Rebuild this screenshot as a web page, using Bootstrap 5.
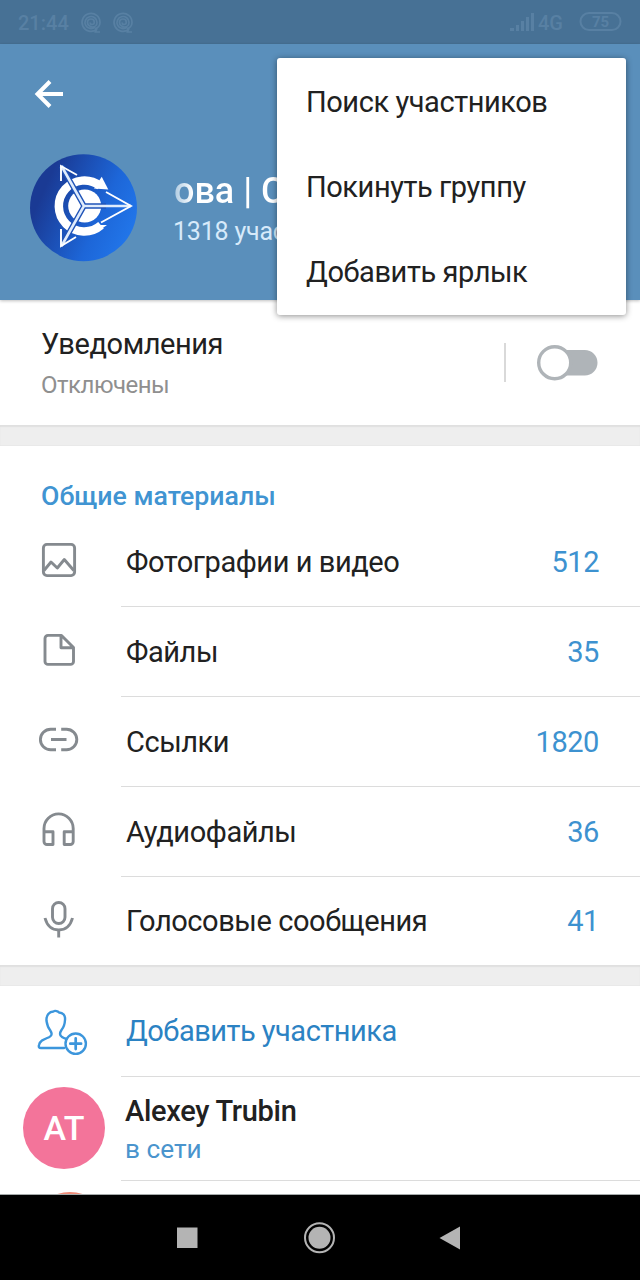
<!DOCTYPE html>
<html lang="ru">
<head>
<meta charset="utf-8">
<meta name="viewport" content="width=device-width, initial-scale=1">
<title>Группа</title>
<link href="https://cdn.jsdelivr.net/npm/bootstrap@5.3.0/dist/css/bootstrap.min.css" rel="stylesheet">
<style>
body{font-family:Roboto,"Noto Sans",sans-serif;font-size:29px;line-height:34px;color:#212121;background:#fff}
.screen{width:640px;height:1280px}
.tight{letter-spacing:-.43px}
.statusbar{height:44px;background:#477195;color:#5880a3;font-size:20px;line-height:44px;font-weight:500;padding-top:2px}
.profile{height:256px;background:#5a8fbb;box-shadow:0 1px 3px rgba(0,0,0,.25);z-index:1}
.group-title{font-size:36px;line-height:40px;font-weight:500;color:#fff;padding-left:1px;background:linear-gradient(90deg,#a9c7df 0,#fff 20px);-webkit-background-clip:text;background-clip:text;-webkit-text-fill-color:transparent}
.group-count{font-size:25px;letter-spacing:-.2px;line-height:30px;color:#d7eafa;margin-top:6px}
.popup{left:277px;top:14px;width:349px;height:257px;border-radius:3px;box-shadow:0 1px 6px rgba(0,0,0,.45);z-index:5;padding-top:1px;background:#fff}
.popup a{height:85.400px;padding-left:29px;color:#212121;text-decoration:none}
.notify{height:125px;padding:27px 41px 0}
.sub-status{font-size:24px;letter-spacing:-.5px;line-height:30px;color:#8f8f8f;margin-top:9px}
.toggle-sep{width:2px;height:39px;background:#d9d9d9;margin-right:31px}
.divider-band{height:21px;background:#eee;box-shadow:inset 0 2px 1px #e0e0e0,inset 0 -1px 0 #e9e9e9}
.heading{height:71px;padding:33px 0 0 41px;font-size:26.700px;font-weight:500;color:#4094d2}
.item{height:90px}
.item-icon{width:121px;flex:none}
.item-body{height:90px;padding:0 41px 0 5px;border-bottom:1px solid #dcdcdc}
.last-item,.last-item .item-body{height:88px;border:0}
.add-item,.add-item .item-body{height:91px}
.item-count{color:#3d92d0}
.line-icon{fill:none;stroke:#858a8f;stroke-width:2.9;stroke-linejoin:round}
.add-text{color:#2b82c3;letter-spacing:-.5px}
.member{height:104px}
.member .item-body{height:104px;padding:17px 0 0 4px}
.initials{width:82px;height:82px;border-radius:50%;background:#f3749a;color:#fff;font-size:34px;font-weight:500;margin:10px 0 0 23px}
.member-name{font-size:29px;letter-spacing:-.3px;font-weight:500;line-height:34px}
.member-status{font-size:26.200px;line-height:34px;color:#4a94cd;margin-top:4px}
.next-member{height:14px;border-bottom:1px solid #a5aaaa}
.navkeys{height:85px;background:#000}
svg{display:block}
</style>
</head>
<body>
<main class="screen d-flex flex-column overflow-hidden position-relative">
  <div class="statusbar d-flex align-items-center flex-shrink-0">
    <span style="width:62px;padding-left:18px">21:44</span>
    <svg width="64" height="30" style="margin-left:14px" viewBox="76 7 64 30" fill="none" stroke="#5880a3" stroke-width="1.700">
      <g id="spiral"><path d="M100 31h-4.500l1-2.500A9 9 0 1 1 100 21.500c0 3.500-2.500 6-5 6M95 26A6 6 0 1 1 97 21.500c0 2.500-2 4.500-4.500 4.500s-5-2-5-4.500 1.500-3.500 3.500-3.500 3.300 1.500 3.300 3.300-1 2.200-2.300 2.200-2-1-1.500-2"/></g>
      <use href="#spiral" x="32"/>
    </svg>
    <svg class="ms-auto" width="29" height="24" viewBox="509 11 29 24" fill="#5880a3"><path d="M510 28h4v3h-4zM516 25h3v6h-3zM521 21h3v10h-3zM526 17h3v14h-3zM531 13h3v18h-3z"/></svg>
    <span style="width:41px">4G</span>
    <svg width="61" height="24" viewBox="579 10 61 24"><rect x="580.500" y="12" width="40" height="17" rx="8.500" fill="none" stroke="#5880a3" stroke-width="2"/><text x="600.500" y="26" text-anchor="middle" font-size="15" font-weight="700" fill="#5880a3">75</text></svg>
  </div>

  <header class="profile position-relative flex-shrink-0">
    <svg width="80" height="100" viewBox="0 44 80 100" fill="none" stroke="#fff" stroke-width="4"><path d="M50 81.500 37.500 94 50 106.500M37.500 94H63"/></svg>
    <div class="d-flex" style="margin-top:10px">
      <svg class="flex-shrink-0" width="173" height="110" viewBox="0 154 173 110">
        <defs><linearGradient id="blue" x1="0" y1=".3" x2="1" y2=".75"><stop offset=".12" stop-color="#1a3a94"/><stop offset=".65" stop-color="#1d66d8"/><stop offset="1" stop-color="#2278ec"/></linearGradient></defs>
        <circle cx="83.500" cy="207.700" r="53.500" fill="url(#blue)"/>
        <path d="M100 185.900A25.500 25.500 0 1 0 101 225.300" fill="none" stroke="#fff" stroke-width="8.500"/>
        <path d="m97 225 10 0-7 5z" fill="#fff"/>
        <path d="m101.700 176.700 6.600 12.800-14.300-1z" fill="#fff"/>
        <circle cx="84.700" cy="206" r="16.500" fill="#fff"/>
        <path d="M61.500 166 84 206 61.500 246M84 206h22" fill="none" stroke="#2054b8" stroke-width="5.500"/>
        <path d="M61.500 166 84 206 61.500 246M84 206h47" fill="none" stroke="#e0ecfc" stroke-width="2.600"/>
        <path d="M61 181v-15l16 9M61 229v17l15-9M106 192l25 14-30 16.500" fill="none" stroke="#fff" stroke-width="1.900"/>
      </svg>
      <div class="text-nowrap" style="padding-top:17px">
        <div class="group-title">ова | С</div>
        <div class="group-count">1318 участников</div>
      </div>
    </div>
    <nav class="popup position-absolute d-flex flex-column tight">
      <a class="d-flex align-items-center" href="#"><span>Поиск участников</span></a>
      <a class="d-flex align-items-center" href="#"><span>Покинуть группу</span></a>
      <a class="d-flex align-items-center" href="#"><span>Добавить ярлык</span></a>
    </nav>
  </header>

  <section class="notify d-flex flex-shrink-0">
    <div>
      <div class="tight">Уведомления</div>
      <div class="sub-status">Отключены</div>
    </div>
    <div class="d-flex ms-auto" style="padding-top:16px">
      <div class="toggle-sep"></div>
      <svg width="62" height="40" viewBox="537 343 62 40"><rect x="553" y="350" width="44.500" height="25.500" rx="12.700" fill="#afb4b8"/><circle cx="554.700" cy="362.700" r="16" fill="#fff" stroke="#afb4b8" stroke-width="3.400"/></svg>
    </div>
  </section>
  <div class="divider-band flex-shrink-0"></div>

  <section class="flex-shrink-0">
    <div class="heading"><span>Общие материалы</span></div>
    <div class="item tight d-flex">
      <svg class="item-icon line-icon" width="121" height="90" viewBox="0 517 121 90"><rect x="43.400" y="544.400" width="31.200" height="31.200" rx="3.500"/><path d="m44 570.500 7-8.500 6.300 6 7-8.500 9.500 11"/></svg>
      <div class="item-body flex-grow-1 d-flex align-items-center justify-content-between"><span>Фотографии и видео</span><span class="item-count">512</span></div>
    </div>
    <div class="item tight d-flex">
      <svg class="item-icon line-icon" width="121" height="90" viewBox="0 607 121 90"><path d="M61.500 635.400H48a3 3 0 0 0-3 3v23a3 3 0 0 0 3 3h22.500a3 3 0 0 0 3-3V647.500zM61 635.500v12.200h12.500"/></svg>
      <div class="item-body flex-grow-1 d-flex align-items-center justify-content-between"><span>Файлы</span><span class="item-count">35</span></div>
    </div>
    <div class="item tight d-flex">
      <svg class="item-icon line-icon" width="121" height="90" viewBox="0 697 121 90"><path d="M56 729.200h-5.300a10.300 10.300 0 0 0 0 20.600H56M61.200 729.200h5.300a10.300 10.300 0 0 1 0 20.600h-5.300M51 739.500h15.500"/></svg>
      <div class="item-body flex-grow-1 d-flex align-items-center justify-content-between"><span>Ссылки</span><span class="item-count">1820</span></div>
    </div>
    <div class="item tight d-flex">
      <svg class="item-icon line-icon" width="121" height="90" viewBox="0 787 121 90"><path d="M44 832v-3.500a14.600 14.600 0 0 1 29.200 0V832M44 831.800h9v12.700h-6a3 3 0 0 1-3-3zM73.200 831.800h-9v12.700h6a3 3 0 0 0 3-3z"/></svg>
      <div class="item-body flex-grow-1 d-flex align-items-center justify-content-between"><span>Аудиофайлы</span><span class="item-count">36</span></div>
    </div>
    <div class="item last-item tight d-flex">
      <svg class="item-icon line-icon" width="121" height="88" viewBox="0 877 121 88"><rect x="52.500" y="902.500" width="12.500" height="21" rx="6.250"/><path d="M45 918c2 7.500 7 12 13.700 12s11.800-4.500 13.800-12M58.700 930v7.500"/></svg>
      <div class="item-body flex-grow-1 d-flex align-items-center justify-content-between"><span>Голосовые сообщения</span><span class="item-count">41</span></div>
    </div>
  </section>
  <div class="divider-band flex-shrink-0"></div>

  <section class="flex-grow-1">
    <div class="item add-item d-flex">
      <svg class="item-icon" width="121" height="90" viewBox="0 986 121 90" fill="none" stroke="#3c96dc" stroke-width="2.400" stroke-linecap="round" stroke-linejoin="round"><path d="M64 1048H41c-2 0-2.500-1-2-3 1-5 6-6 10.500-8 3-1.400 2.500-4 .5-7-2.500-3-3-6-3.500-9-.5-6 3-9.500 7-9.500 1.500-1.500 5 0 5.500 1 4 0 6.500 3 6 7.500-.2 4-1 7-3.500 10-2 3-2 5.500.5 7 1.500 1 3 1.500 4.500 2"/><circle cx="75.700" cy="1043.700" r="10.200"/><path d="M70.300 1043.700h10.800M75.700 1038.300v10.800" stroke-width="2.700"/></svg>
      <div class="item-body flex-grow-1 d-flex align-items-center add-text"><span>Добавить участника</span></div>
    </div>
    <div class="member d-flex">
      <div class="item-icon"><div class="initials d-flex align-items-center justify-content-center"><span>AT</span></div></div>
      <div class="item-body flex-grow-1">
        <div class="member-name"><span>Alexey Trubin</span></div>
        <div class="member-status"><span>в сети</span></div>
      </div>
    </div>
    <div class="next-member"><svg width="121" height="13" viewBox="0 1181 121 13"><circle cx="70" cy="1232.500" r="40.500" fill="#ef8b78"/></svg></div>
  </section>

  <footer class="navkeys flex-shrink-0">
    <svg width="640" height="85" viewBox="0 1195 640 85" fill="#b4b4b4"><rect x="177" y="1227.500" width="20.500" height="20.500"/><circle cx="319.500" cy="1237.800" r="11"/><circle cx="319.500" cy="1237.800" r="14.500" fill="none" stroke="#b4b4b4" stroke-width="2"/><path d="M439.500 1238 460 1226.500v23z"/></svg>
  </footer>
</main>
<script src="https://cdn.jsdelivr.net/npm/bootstrap@5.3.0/dist/js/bootstrap.bundle.min.js"></script>
</body>
</html>
